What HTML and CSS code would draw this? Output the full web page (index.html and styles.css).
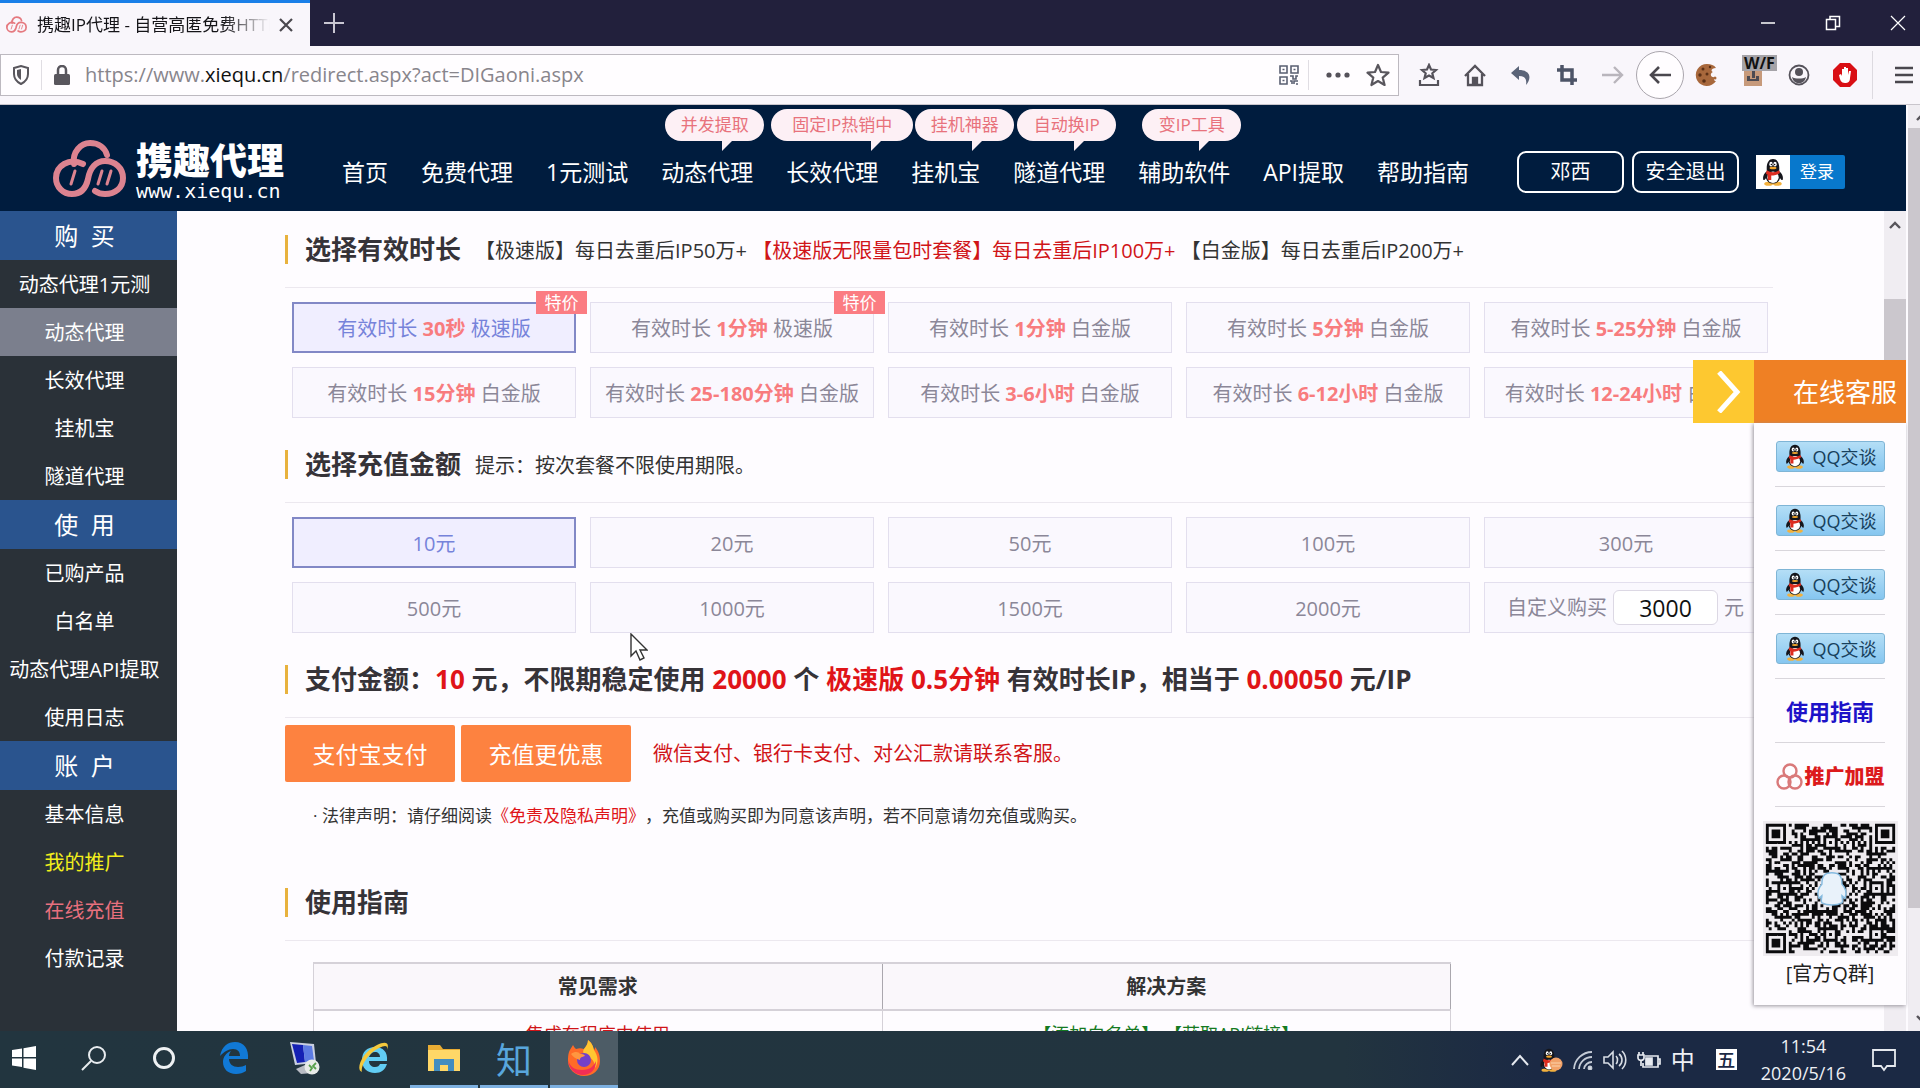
FILE: index.html
```html
<!DOCTYPE html>
<html lang="zh-CN">
<head>
<meta charset="utf-8">
<title>携趣IP代理 - 自营高匿免费HTTP代理</title>
<link rel="stylesheet" href="styles.css">
</head>
<body>
<svg class="defs" aria-hidden="true">
  <symbol id="penguin" viewBox="0 0 24 32">
    <ellipse cx="7" cy="29.500" rx="5" ry="2.300" fill="#f3b13c"/><ellipse cx="17" cy="29.500" rx="5" ry="2.300" fill="#f3b13c"/>
    <path d="M5 15C1 18 0 22 1 25c1 1 2-1 3-2 1 4 4 6 8 6s7-2 8-6c1 1 2 3 3 2 1-3 0-7-4-10 1-9-2-14-7-14S4 6 5 15z" fill="#15161c"/>
    <ellipse cx="12" cy="22" rx="6.500" ry="6.500" fill="#fff"/>
    <ellipse cx="9.700" cy="7" rx="1.900" ry="2.600" fill="#fff"/><ellipse cx="14.300" cy="7" rx="1.900" ry="2.600" fill="#fff"/>
    <circle cx="10.200" cy="7.500" r=".9" fill="#111"/><circle cx="13.800" cy="7.500" r=".9" fill="#111"/>
    <ellipse cx="12" cy="11.500" rx="4" ry="1.400" fill="#f3a62c"/>
    <path d="M5 14c4 3 10 3 14 0l1 3c-3 2-7 3-10 3v5H6v-6c-1 0-2-1-2-2z" fill="#dd2c1f"/>
  </symbol>
  <symbol id="cloud" viewBox="0 0 73 57">
    <g fill="none" stroke="currentColor" stroke-width="6" stroke-linecap="round">
      <path d="M21 24C19 12 28 3 37 3c9 0 15 5 17 12"/>
      <path d="M30 24C16 17 3 26 3 38c0 9 7 16 16 16 9 0 14-6 16-15 2-11 8-18 17-18 10 0 18 7 18 17s-8 16-18 16c-4 0-7-1-10-3"/>
      <path stroke-width="3" d="M22 31l-4 13M49 31l-4 13M58 31l-4 13"/>
    </g>
  </symbol>
</svg>

<header class="tabs">
  <div class="tab">
    <svg class="tab-icon" width="21" height="17"><use href="#cloud"/></svg>
    <span class="tab-title">携趣IP代理 - 自营高匿免费HTTP代理</span>
    <button class="plain" aria-label="关闭标签页"><svg width="16" height="16" viewBox="0 0 16 16"><path d="M2 2l12 12M14 2L2 14" stroke="#4a484e" stroke-width="2.200"/></svg></button>
  </div>
  <button class="plain new-tab" aria-label="新标签页"><svg width="20" height="20" viewBox="0 0 20 20"><path d="M10 0v20M0 10h20" stroke="#c9c7d2" stroke-width="2"/></svg></button>
  <div class="window-buttons">
    <button class="plain" aria-label="最小化"><svg width="16" height="16" viewBox="0 0 16 16"><path d="M1 8h14" stroke="#fff" stroke-width="1.500"/></svg></button>
    <button class="plain" aria-label="还原"><svg width="16" height="16" viewBox="0 0 16 16"><path d="M1.500 4.500h9v10h-9zM5 4V1.500h9.500v10H11" fill="none" stroke="#fff" stroke-width="1.500"/></svg></button>
    <button class="plain" aria-label="关闭"><svg width="16" height="16" viewBox="0 0 16 16"><path d="M1 1l14 14M15 1L1 15" stroke="#fff" stroke-width="1.200"/></svg></button>
  </div>
</header>

<div class="toolbar">
  <div class="url-box">
    <span class="shield"><svg width="18" height="20" viewBox="0 0 18 20"><path d="M2 3l7-2 7 2v6c0 5-3 8-7 10-4-2-7-5-7-10z" fill="none" stroke="#59565d" stroke-width="2"/><path d="M9 4v11c-3-2-4-4-4-6V5z" fill="#59565d"/></svg></span>
    <svg class="lock" width="18" height="20" viewBox="0 0 18 20"><path d="M5 10V5a4 4 0 018 0v5" fill="none" stroke="#59565d" stroke-width="2.500"/><rect x="1" y="9" width="16" height="11" rx="1.500" fill="#59565d"/></svg>
    <div class="url" role="textbox" aria-label="网址">https://www.<b>xiequ.cn</b>/redirect.aspx?act=DIGaoni.aspx</div>
    <span class="url-tool divided"><svg width="20" height="20" viewBox="0 0 20 20" fill="none" stroke="#5a5f72" stroke-width="1.600"><path d="M1 1h7v7H1zM12 1h7v7h-7zM1 12h7v7H1zM3.500 4.500h2M14.500 4.500h2M3.500 15.500h2M11 11h3v3h3v-3h2M11 16h2v3M15 19v-3h4M17 19h2"/></svg></span>
    <span class="url-tool dots"><svg width="24" height="6" viewBox="0 0 24 6" fill="#55525a"><circle cx="3" cy="3" r="2.600"/><circle cx="12" cy="3" r="2.600"/><circle cx="21" cy="3" r="2.600"/></svg></span>
    <span class="url-tool"><svg width="24" height="24" viewBox="0 0 24 24"><path d="M12 2l3 7 7.500.6-5.800 5 1.900 7.400L12 18l-6.600 4 1.900-7.400-5.800-5L9 9z" fill="none" stroke="#59565d" stroke-width="2.200" stroke-linejoin="round"/></svg></span>
  </div>
  <div class="tools">
    <button class="plain" aria-label="书签"><svg width="22" height="24" viewBox="0 0 22 24" fill="none" stroke="#55525a" stroke-width="2.200"><path d="M11 2l2 4.500 5 .5-3.700 3.300L15.500 15 11 12.500 6.500 15l1.200-4.700L4 7l5-.5zM2 17v5h18v-5"/></svg></button>
    <button class="plain" aria-label="主页"><svg width="24" height="24" viewBox="0 0 24 24" fill="none" stroke="#55525a" stroke-width="2.300"><path d="M2 13L12 3l10 10M5 11v11h14V11"/><path d="M10 22v-7h4v7" fill="#55525a"/></svg></button>
    <button class="plain" aria-label="撤销"><svg width="22" height="22" viewBox="0 0 22 22"><path d="M9 2L1 9l8 7v-4c6 0 8 3 7 9 5-5 6-15-7-15z" fill="#5b6478"/></svg></button>
    <button class="plain" aria-label="截图"><svg width="22" height="22" viewBox="0 0 22 22" fill="none" stroke="#4d5467" stroke-width="3.500"><path d="M6 1v15h15M1 6h15v15"/></svg></button>
    <button class="plain" aria-label="前进"><svg width="22" height="20" viewBox="0 0 22 20" fill="none" stroke="#b9b5bc" stroke-width="2.400"><path d="M0 10h20M12 2l8 8-8 8"/></svg></button>
    <button class="plain back" aria-label="后退"><svg width="24" height="20" viewBox="0 0 24 20" fill="none" stroke="#4a474e" stroke-width="2.600"><path d="M23 10H3M11 2l-8 8 8 8"/></svg></button>
    <button class="plain" aria-label="Cookie"><svg width="24" height="24" viewBox="0 0 24 24"><path d="M12 1a11 11 0 109 17c-2 0-3-2-1-4-4 1-6-3-2-5-3-1-1-4 3-4-2-3-5-4-9-4z" fill="#a8683c"/><g fill="#5b3016"><circle cx="8" cy="6" r="1.500"/><circle cx="5" cy="12" r="1.700"/><circle cx="12" cy="11" r="1.500"/><circle cx="9" cy="18" r="1.800"/><circle cx="15" cy="4" r="1.200"/></g><circle cx="20" cy="15" r="1.500" fill="#a8683c"/></svg></button>
    <button class="plain wf" aria-label="W/F"><svg width="20" height="24" viewBox="0 0 20 24"><path d="M1 8h18v15H1z" fill="#c79a7b"/><path d="M4 18v-5h3v3h6v-3h3v5z" fill="#4b4a52"/><path d="M9 6h3v9H9z" fill="#4b4a52"/></svg><span>W/F</span></button>
    <button class="plain" aria-label="账户"><svg width="22" height="22" viewBox="0 0 22 22"><circle cx="11" cy="11" r="9.500" fill="none" stroke="#55525a" stroke-width="1.800"/><circle cx="11" cy="8" r="4" fill="#55525a"/><path d="M4 13c3 2 11 2 14 0-1 4-3 6-7 6s-6-2-7-6z" fill="#55525a"/></svg></button>
    <button class="plain" aria-label="广告拦截"><svg width="24" height="24" viewBox="0 0 24 24"><path d="M7 0h10l7 7v10l-7 7H7l-7-7V7z" fill="#d90f14"/><path d="M6 12l2-1 1 2V6h2v5V4h2v7V5h2v7l1-4h2l-1 7c0 4-2 5-5 5-4 0-5-3-6-8z" fill="#fff"/></svg></button>
  </div>
  <button class="plain menu" aria-label="菜单"><svg width="18" height="18" viewBox="0 0 18 18"><path d="M0 2h18M0 9h18M0 16h18" stroke="#4a474e" stroke-width="2.400"/></svg></button>
</div>

<div class="viewport">
  <div class="site">
    <div class="site-head">
      <a class="logo" href="#">
        <svg width="73" height="57"><use href="#cloud"/></svg>
        <span><strong>携趣代理</strong><small>www.xiequ.cn</small></span>
      </a>
      <nav class="nav">
        <a href="#">首页</a>
        <a href="#">免费代理</a>
        <a href="#">1元测试</a>
        <a href="#">动态代理<em>并发提取</em></a>
        <a href="#">长效代理<em class="long">固定IP热销中</em></a>
        <a href="#">挂机宝<em>挂机神器</em></a>
        <a href="#">隧道代理<em>自动换IP</em></a>
        <a href="#">辅助软件<em>变IP工具</em></a>
        <a href="#">API提取</a>
        <a href="#">帮助指南</a>
      </nav>
      <div class="account">
        <button>邓西</button>
        <button>安全退出</button>
      </div>
      <a class="qq-login" href="#"><span><svg width="24" height="28"><use href="#penguin"/></svg></span>登录</a>
    </div>

    <div class="body">
      <aside class="side">
        <h2>购&nbsp;&nbsp;买</h2>
        <a href="#">动态代理1元测</a>
        <a href="#" class="on">动态代理</a>
        <a href="#">长效代理</a>
        <a href="#">挂机宝</a>
        <a href="#">隧道代理</a>
        <h2>使&nbsp;&nbsp;用</h2>
        <a href="#">已购产品</a>
        <a href="#">白名单</a>
        <a href="#">动态代理API提取</a>
        <a href="#">使用日志</a>
        <h2>账&nbsp;&nbsp;户</h2>
        <a href="#">基本信息</a>
        <a href="#" class="yellow">我的推广</a>
        <a href="#" class="pink">在线充值</a>
        <a href="#">付款记录</a>
      </aside>

      <main class="main">
        <div class="title"><h3>选择有效时长</h3><p>【极速版】每日去重后IP50万+ <span class="red">【极速版无限量包时套餐】每日去重后IP100万+</span> 【白金版】每日去重后IP200万+</p></div>
        <div class="options">
          <button class="on">有效时长 <b>30秒</b> 极速版<i>特价</i></button>
          <button>有效时长 <b>1分钟</b> 极速版<i>特价</i></button>
          <button>有效时长 <b>1分钟</b> 白金版</button>
          <button>有效时长 <b>5分钟</b> 白金版</button>
          <button>有效时长 <b>5-25分钟</b> 白金版</button>
          <button>有效时长 <b>15分钟</b> 白金版</button>
          <button>有效时长 <b>25-180分钟</b> 白金版</button>
          <button>有效时长 <b>3-6小时</b> 白金版</button>
          <button>有效时长 <b>6-12小时</b> 白金版</button>
          <button>有效时长 <b>12-24小时</b> 白金版</button>
        </div>

        <div class="title"><h3>选择充值金额</h3><p>提示：按次套餐不限使用期限。</p></div>
        <div class="options">
          <button class="on">10元</button>
          <button>20元</button>
          <button>50元</button>
          <button>100元</button>
          <button>300元</button>
          <button>500元</button>
          <button>1000元</button>
          <button>1500元</button>
          <button>2000元</button>
          <label class="custom">自定义购买 <input type="text" value="3000"> 元</label>
        </div>

        <div class="title"><h3>支付金额：<span>10</span> 元，不限期稳定使用 <span>20000</span> 个 <span>极速版 0.5分钟</span> 有效时长IP，相当于 <span>0.00050</span> 元/IP</h3></div>
        <div class="pay">
          <button>支付宝支付</button>
          <button>充值更优惠</button>
          <p class="red">微信支付、银行卡支付、对公汇款请联系客服。</p>
        </div>
        <p class="legal">· 法律声明：请仔细阅读<a href="#">《免责及隐私声明》</a>，充值或购买即为同意该声明，若不同意请勿充值或购买。</p>

        <div class="title guide"><h3>使用指南</h3></div>
        <table>
          <thead><tr><th>常见需求</th><th>解决方案</th></tr></thead>
          <tbody><tr><td class="red">集成在程序中使用</td><td class="green">【添加白名单】 【获取API链接】</td></tr></tbody>
        </table>
        <svg class="cursor" width="18" height="28" viewBox="0 0 18 28"><path d="M1 1v22l5-5 4 9 4-2-4-8h7z" fill="#fff" stroke="#333" stroke-width="1.400"/></svg>
      </main>
      <div class="inner-scroll"><svg width="12" height="8" viewBox="0 0 12 8"><path d="M1 7l5-5 5 5" fill="none" stroke="#57545a" stroke-width="2.400"/></svg><div></div></div>
    </div>

    <aside class="service">
      <div class="service-head">
        <button class="plain" aria-label="收起"><svg width="26" height="42" viewBox="0 0 26 42"><path d="M3 1l18 20L3 41" fill="none" stroke="#fff" stroke-width="5"/></svg></button>
        <span>在线客服</span>
      </div>
      <div class="service-list">
        <div><a class="qq" href="#"><svg width="24" height="25"><use href="#penguin"/></svg>QQ交谈</a></div>
        <div><a class="qq" href="#"><svg width="24" height="25"><use href="#penguin"/></svg>QQ交谈</a></div>
        <div><a class="qq" href="#"><svg width="24" height="25"><use href="#penguin"/></svg>QQ交谈</a></div>
        <div><a class="qq" href="#"><svg width="24" height="25"><use href="#penguin"/></svg>QQ交谈</a></div>
        <div><a class="help" href="#">使用指南</a></div>
        <div><a class="join" href="#"><svg width="27" height="28" viewBox="0 0 27 28" fill="none" stroke="#d9797a" stroke-width="2.400"><circle cx="14" cy="8" r="6.500"/><circle cx="8" cy="19" r="6.500"/><circle cx="19" cy="19" r="6.500"/></svg>推广加盟</a></div>
        <svg class="qr" viewBox="-1 -1 47 47" role="img" aria-label="官方Q群二维码"><path id="qr-cells" fill="#0b0b0d"/><path d="M18.500 26c-1-2 0-4 1-5 0-3 1-4 3.500-4s3.500 1 3.500 4c1 1 2 3 1 5l-1-1c0 1 .5 1.500 0 2.500-2 1-5 1-7 0-.5-1 0-1.500 0-2.500z" fill="#e9f2fa" stroke="#85bbe0" stroke-width=".5"/></svg>
        <p>[官方Q群]</p>
      </div>
    </aside>
  </div>
  <div class="outer-scroll">
    <svg width="12" height="8" viewBox="0 0 12 8"><path d="M1 7l5-5 5 5" fill="none" stroke="#57545a" stroke-width="2.400"/></svg>
    <div></div>
    <svg width="12" height="8" viewBox="0 0 12 8"><path d="M1 1l5 5 5-5" fill="none" stroke="#57545a" stroke-width="2.400"/></svg>
  </div>
</div>

<footer class="taskbar">
  <div class="apps">
    <button class="plain" aria-label="开始"><svg width="24" height="24" viewBox="0 0 24 24" fill="#fff"><path d="M0 4l10-1.500V11H0zM11.500 2.300L24 0v11H11.500zM0 12.500h10V21L0 19.500zM11.500 12.500H24V24l-12.500-2.300z"/></svg></button>
    <button class="plain" aria-label="搜索"><svg width="26" height="26" viewBox="0 0 26 26" fill="none" stroke="#e8ecef" stroke-width="2"><circle cx="16" cy="10" r="8"/><path d="M10 16L1 25"/></svg></button>
    <button class="plain" aria-label="Cortana"><svg width="24" height="24" viewBox="0 0 24 24"><circle cx="12" cy="12" r="9.500" fill="none" stroke="#eef1f3" stroke-width="3"/></svg></button>
    <button class="plain" aria-label="Edge"><svg width="30" height="32" viewBox="0 0 30 32"><path d="M1 14C3 4 9 0 16 0c9 0 14 7 13 17H10c0 5 4 8 9 8 3 0 6-1 8-2v6c-3 2-6 3-10 3C9 32 4 27 4 20c0-5 3-9 8-11-1 1-2 3-2 5h11c0-4-2-7-7-7-5 0-9 3-13 7z" fill="#1179d6"/></svg></button>
    <button class="plain" aria-label="远程桌面"><svg width="32" height="34" viewBox="0 0 32 34"><path d="M2 1l24 2 2 19-21 2z" fill="#c9cfe0"/><path d="M4 3l11 1 2 17-8 1z" fill="#1420b4"/><path d="M15 4l9 1 2 15-9 1z" fill="#5c7be2"/><path d="M8 28l9-4 9 3-2 5-11 1z" fill="#b9bcc4"/><circle cx="24" cy="26" r="7.500" fill="#e8ebe8"/><path d="M21 24l3 3-2 3M28 22l-3 3 3 3" fill="none" stroke="#58a04c" stroke-width="1.800"/></svg></button>
    <button class="plain" aria-label="Internet Explorer"><svg width="34" height="34" viewBox="0 0 34 34"><path d="M30 20H12c0 4 3 6 6 6s4-1 5-3h7c-2 6-6 9-12 9-8 0-13-5-13-13S10 6 18 6c8 0 13 5 12 14zm-7-4c0-3-2-5-5-5s-5 2-6 5z" fill="#62cdf4"/><path d="M5 31C-2 29 5 11 20 4c8-4 13-3 10 5 1-5-2-5-8-2C11 12 3 26 5 31z" fill="#f5c93c"/></svg></button>
    <button class="plain open" aria-label="文件资源管理器"><svg width="32" height="28" viewBox="0 0 32 28"><path d="M0 1h12l3 4h17v21H0z" fill="#e9ad34"/><path d="M0 6h32v21H0z" fill="#ffd767"/><path d="M6 27V15h20v12h-6v-6h-8v6z" fill="#438dc0"/></svg></button>
    <button class="plain open zhi" aria-label="知">知</button>
    <button class="plain open current" aria-label="Firefox"><svg width="34" height="36" viewBox="0 0 34 36"><path d="M2 12c1-3 3-5 4-7 1 2 2 3 3 4 3-1 5-1 8 0 2-3 4-5 4-9 5 4 5 7 6 10 1-1 1-2 1-3 4 5 5 9 5 14 0 9-7 15-16 15S1 29 1 21c0-3 0-6 1-9z" fill="#ff6b27"/><path d="M21 0c5 4 5 7 6 10 4 6 5 12 1 18 0-6-3-10-8-12-3-1-5-4-3-7 2-3 4-5 4-9z" fill="#ffc631"/><path d="M1 20c2 7 7 10 14 10 8 0 12-4 14-9 0 9-6 14-13 14S2 30 1 20z" fill="#f22e55"/><circle cx="17" cy="20" r="7" fill="#7440c8"/><path d="M4 14c4-3 8-2 9 0 2 0 4 0 5 2-3 1-5 1-5 4-4-1-7-3-9-6z" fill="#ff9640"/></svg></button>
  </div>
  <div class="tray">
    <svg width="18" height="12" viewBox="0 0 18 12"><path d="M1 11l8-9 8 9" fill="none" stroke="#e6e9ef" stroke-width="2"/></svg>
    <svg width="24" height="24" viewBox="0 0 24 24"><use href="#penguin" width="20" height="24"/><circle cx="17" cy="16" r="6.500" fill="#f2a269"/><path d="M12 15h10M13 18h8" stroke="#fbd3ae" stroke-width="1"/></svg>
    <svg width="20" height="20" viewBox="0 0 20 20" fill="none" stroke="#c4cbd6" stroke-width="1.800"><path d="M1 19A18 18 0 0119 2M6 19A13 13 0 0119 7M11 19a8 8 0 018-7"/><circle cx="17" cy="18" r="1.500" fill="#fff"/></svg>
    <svg width="24" height="20" viewBox="0 0 24 20" fill="none" stroke="#d8dde5" stroke-width="1.600"><path d="M1 7h4l5-5v16l-5-5H1zM13 6c2 2 2 6 0 8M16 4c4 3 4 9 0 12M19 1c5 5 5 13 0 18"/></svg>
    <svg width="24" height="18" viewBox="0 0 24 18" fill="none" stroke="#e6e9ef" stroke-width="1.700"><path d="M8 5h13v11H6v-4M21 8h2v5h-2M2 1v3M6 1v3M1 4h6v3c0 3-6 3-6 0zM4 9v6"/><path d="M9 7h6v7H9z" fill="#e6e9ef"/></svg>
    <span class="ime">中</span>
    <span class="wubi">五</span>
    <span class="clock"><time>11:54</time><time>2020/5/16</time></span>
    <svg width="24" height="24" viewBox="0 0 24 24"><path d="M1 2h22v16h-8l-3 4-3-4H1z" fill="none" stroke="#e6e9ef" stroke-width="1.800"/></svg>
  </div>
</footer>
<script src="qr.js"></script>
</body>
</html>
```
FILE: styles.css
```css
* { box-sizing: border-box; }
body, h2, h3, p { margin: 0; }
body {
  height: 100vh;
  display: flex;
  flex-direction: column;
  overflow: hidden;
  background: #fefcff;
  color: #333;
  font: 20px/28px "Open Sans", "Noto Sans CJK SC", sans-serif;
  text-spacing-trim: space-all;
}
a { color: inherit; text-decoration: none; }
button, input { font: inherit; color: inherit; }
svg { display: block; flex: none; }
.defs { position: absolute; width: 0; height: 0; }
.plain {
  display: flex;
  align-items: center;
  justify-content: center;
  padding: 0;
  border: 0;
  background: none;
}
.red { color: #d01418; }
.green { color: #157a22; }

/* browser chrome */
.tabs { flex: none; display: flex; height: 46px; background: #22203c; }
.tab {
  display: flex;
  align-items: center;
  width: 310px;
  padding: 0 16px 0 6px;
  border-top: 3px solid #1a7fe8;
  background: #f9f6fb;
}
.tab-icon { color: #e5797f; }
.tab-title {
  flex: 1;
  margin: 0 8px 0 10px;
  overflow: hidden;
  white-space: nowrap;
  font-size: 17px;
  color: #151418;
  -webkit-mask-image: linear-gradient(to right, #000 80%, transparent);
  mask-image: linear-gradient(to right, #000 80%, transparent);
}
.new-tab { width: 48px; }
.window-buttons { display: flex; gap: 21px; margin-left: auto; }
.window-buttons button { width: 44px; }

.toolbar {
  flex: none;
  display: flex;
  align-items: center;
  height: 59px;
  border-bottom: 1px solid #c9c5cc;
  background: #f9f6fb;
}
.url-box {
  flex: 1;
  display: flex;
  align-items: center;
  height: 42px;
  margin-right: 7px;
  border: 1px solid #bdb9c0;
  background: #fffdff;
}
.shield {
  display: flex;
  align-items: center;
  width: 41px;
  height: 30px;
  padding-left: 11px;
  border-right: 1px solid #e0dde3;
}
.lock { margin: 0 14px 0 11px; }
.url { flex: 1; font-size: 20px; color: #88858c; }
.url b { font-weight: 400; color: #111; }
.url-tool { display: flex; justify-content: center; align-items: center; width: 40px; height: 30px; }
.dots { width: 49px; padding-left: 9px; }
.divided { border-right: 1px solid #e0dde3; }
.tools { display: flex; }
.tools button { width: 46px; height: 48px; }
.tools .back { width: 48px; border: 1px solid #aaa6ad; border-radius: 50%; background: #fffdff; }
.wf { position: relative; }
.wf span {
  position: absolute;
  left: 12px;
  top: 4px;
  padding: 0 2px;
  background: #a5a3a8;
  color: #111;
  font: bold 16px/16px "Open Sans", sans-serif;
}
.menu { width: 48px; height: 48px; margin-left: 4px; padding-left: 14px; border-left: 1px solid #dddae0; }

/* site */
.viewport { flex: 1; display: flex; min-height: 0; }
.site { position: relative; flex: 1; display: flex; flex-direction: column; min-width: 0; }
.site-head {
  flex: none;
  display: flex;
  align-items: center;
  height: 106px;
  padding: 28px 61px 0 53px;
  background: #001c3e;
  color: #fff;
}
.logo { display: flex; align-items: center; gap: 10px; margin: -7px 58px 0 0; }
.logo svg { color: #dc8390; }
.logo span { display: grid; padding-top: 4px; }
.logo strong { font-size: 37px; line-height: 40px; font-weight: 900; }
.logo small { font: 20px/20px "DejaVu Sans Mono", monospace; }
.nav { display: flex; gap: 33px; font-size: 23px; line-height: 30px; white-space: nowrap; }
.nav a { position: relative; }
.nav em {
  position: absolute;
  left: 4px;
  top: -48px;
  width: 99px;
  border-radius: 16px;
  background: #fdf0f5;
  color: #e8727c;
  font: 17px/32px "Open Sans", "Noto Sans CJK SC", sans-serif;
  text-align: center;
}
.nav em::after {
  content: "";
  position: absolute;
  right: 31px;
  top: 31px;
  width: 0;
  height: 0;
  border-top: 11px solid #fdf0f5;
  border-right: 11px solid transparent;
}
.nav .long { left: -15px; width: 142px; }
.account { display: flex; gap: 8px; margin-left: auto; }
.account button {
  width: 107px;
  height: 42px;
  padding: 0;
  border: 2px solid #fff;
  border-radius: 9px;
  background: none;
}
.qq-login {
  display: flex;
  align-items: center;
  width: 89px;
  height: 34px;
  margin-left: 17px;
  gap: 10px;
  border-radius: 2px;
  background: #0878cc;
  font-size: 17px;
}
.qq-login span { display: flex; align-items: center; justify-content: center; width: 34px; height: 34px; background: #fff; }

.body { flex: 1; display: flex; min-height: 0; }
.side { flex: none; width: 177px; overflow: hidden; background: #2a3138; color: #fff; text-align: center; }
.side h2 { padding-right: 8px; background: #2a548e; font-size: 24px; line-height: 49px; font-weight: 400; }
.side a { display: block; padding: 2px 8px 0 0; line-height: 46px; white-space: nowrap; }
.side .on { background: #7b7f8d; }
.side .yellow { color: #f2ee1c; }
.side .pink { color: #e8707e; }

.main { position: relative; flex: 1; min-width: 0; overflow: hidden; padding: 0 111px 0 108px; }
.title {
  display: flex;
  align-items: center;
  height: 77px;
  margin-top: 8px;
  border-bottom: 1px solid #ece8ef;
  white-space: nowrap;
}
.title:first-child { margin-top: 0; }
.title::before { content: ""; width: 3px; height: 29px; margin-right: 17px; background: #e8b23e; }
.title h3 { font-size: 26px; line-height: 36px; font-weight: 700; color: #363338; }
.title h3 span { color: #e01418; }
.title p { margin-left: 14px; padding-top: 3px; }
.options { display: grid; grid-template-columns: repeat(5, 1fr); gap: 14px; margin: 14px 5px 0 7px; }
.options button, .custom {
  position: relative;
  height: 51px;
  padding: 2px 0 0;
  border: 1px solid #e3dfee;
  background: #faf8fe;
  color: #8b8798;
  white-space: nowrap;
}
.options b { color: #f87c7e; }
.options .on { border: 2px solid #8288c6; background: #f0eeff; color: #7683da; }
.options i {
  position: absolute;
  right: -12px;
  top: -12px;
  width: 51px;
  background: #fb7c82;
  color: #fff;
  font: 17px/23px "Open Sans", "Noto Sans CJK SC", sans-serif;
}
.options .on i { right: -13px; top: -13px; }
.options .custom { display: flex; align-items: center; gap: 6px; padding: 0 0 0 22px; }
.custom input {
  width: 105px;
  height: 35px;
  padding: 0;
  border: 1px solid #dcd8e4;
  border-radius: 6px;
  background: #fff;
  color: #111;
  font-size: 23px;
  text-align: center;
}
.pay { display: flex; align-items: center; gap: 6px; margin-top: 7px; }
.pay button {
  width: 170px;
  height: 57px;
  padding: 0;
  border: 0;
  border-radius: 2px;
  background: #fd8240;
  color: #fff;
  font-size: 23px;
}
.pay p { margin-left: 16px; }
.legal { margin: 17px 0 0 28px; font-size: 17px; line-height: 34px; }
.legal a { color: #e01418; }
.guide { margin-top: 31px; }
table {
  width: 1138px;
  margin: 21px 0 0 28px;
  border-collapse: collapse;
  table-layout: fixed;
  text-align: center;
}
th { height: 47px; padding: 0; border: 1px solid #aaa7ae; border-top: 2px solid #d5d1d8; border-bottom: 2px solid #d5d1d8; border-left-color: #d5d1d8; background: #faf7fb; }
td { height: 48px; padding: 0; border: 1px solid #d5d1d8; font-size: 18px; }
.cursor { position: absolute; left: 453px; top: 422px; }

.inner-scroll { flex: none; display: flex; flex-direction: column; align-items: center; width: 22px; padding-top: 10px; background: #f0edf2; }
.inner-scroll div { width: 22px; height: 240px; margin-top: 70px; background: #cbc7cd; }
.outer-scroll {
  flex: none;
  display: flex;
  flex-direction: column;
  width: 14px;
  padding: 8px 0 8px 8px;
  border-left: 2px solid #fdfbff;
  overflow: hidden;
  background: #f0edf2;
}
.outer-scroll div { flex: 0 1 780px; width: 12px; margin: 7px 0 auto -8px; background: #cbc7cd; }

/* customer service panel */
.service { position: absolute; top: 255px; right: 0; width: 213px; }
.service-head { display: flex; height: 63px; background: #ef8024; color: #fff; font-size: 26px; line-height: 65px; }
.service-head button { width: 61px; padding-left: 10px; background: #fdc830; }
.service-head span { flex: 1; padding-right: 9px; text-align: right; }
.service-list {
  margin-left: 61px;
  height: 582px;
  padding: 0 21px;
  background: #fefcff;
  box-shadow: -1px 1px 4px #98949c;
  text-align: center;
}
.service-list div { display: flex; align-items: center; justify-content: center; height: 64px; padding-top: 4px; border-bottom: 1px solid #d9d6dc; }
.qq {
  display: flex;
  align-items: center;
  gap: 6px;
  width: 109px;
  height: 31px;
  padding-left: 6px;
  border: 1px solid #7fb5d6;
  border-radius: 3px;
  background: linear-gradient(#b4def6, #86c6f0);
  color: #17405c;
  font-size: 18px;
}
.help { padding-bottom: 4px; color: #1d12c8; font-size: 22px; font-weight: 700; }
.join { display: flex; align-items: center; gap: 2px; color: #dc1a1c; font-size: 20px; font-weight: 900; white-space: nowrap; }
.qr { width: 135px; height: 135px; margin: 14px 0 0 -12px; background: #efecf0; }
.service-list p { margin-top: 4px; color: #222; white-space: nowrap; }

/* taskbar */
.taskbar {
  flex: none;
  display: flex;
  justify-content: space-between;
  height: 57px;
  background: linear-gradient(to right, #22353f, #22343f 70%, #1b2944 80%);
  color: #eef0f4;
}
.apps { display: flex; gap: 2px; margin-left: -10px; }
.apps button { width: 68px; border-bottom: 3px solid transparent; }
.apps .open { border-bottom-color: #7db0e0; }
.apps .current { background: #4d5c66; }
.apps .zhi { color: #58a6dc; font: 36px/40px "Noto Sans CJK SC", sans-serif; }
.tray { display: flex; align-items: center; gap: 10px; padding-right: 24px; }
.ime { font-size: 24px; }
.wubi { width: 21px; margin-left: 11px; background: #fff; color: #1b2944; font: 500 18px/21px "Noto Sans CJK SC", sans-serif; text-align: center; }
.clock { display: grid; margin: 0 16px 0 14px; font-size: 18px; line-height: 27px; text-align: center; }
```
FILE: qr.js
```js
// Draws a 45-module code: finders, timing lines, alignment marks and data cells.
(function () {
  const size = 45;
  const centres = [[22, 6], [6, 22], [22, 22], [38, 22], [22, 38], [38, 38]];
  let seed = 20200516;
  const random = () => (seed = (seed * 1103515245 + 12345) % 2147483648) / 2147483648;

  function dark(x, y) {
    const noise = random() < 0.52;
    for (const [fx, fy] of [[3, 3], [41, 3], [3, 41]]) {
      const d = Math.max(Math.abs(x - fx), Math.abs(y - fy));
      if (d <= 4) return d === 3 || d < 2;
    }
    for (const [ax, ay] of centres) {
      const d = Math.max(Math.abs(x - ax), Math.abs(y - ay));
      if (d <= 2) return d !== 1;
    }
    if (x === 6 || y === 6) return (x + y) % 2 === 0;
    return noise;
  }

  let path = "";
  for (let y = 0; y < size; y++)
    for (let x = 0; x < size; x++)
      if (dark(x, y)) path += `M${x} ${y}h1v1h-1z`;
  document.getElementById("qr-cells").setAttribute("d", path);
})();
```
